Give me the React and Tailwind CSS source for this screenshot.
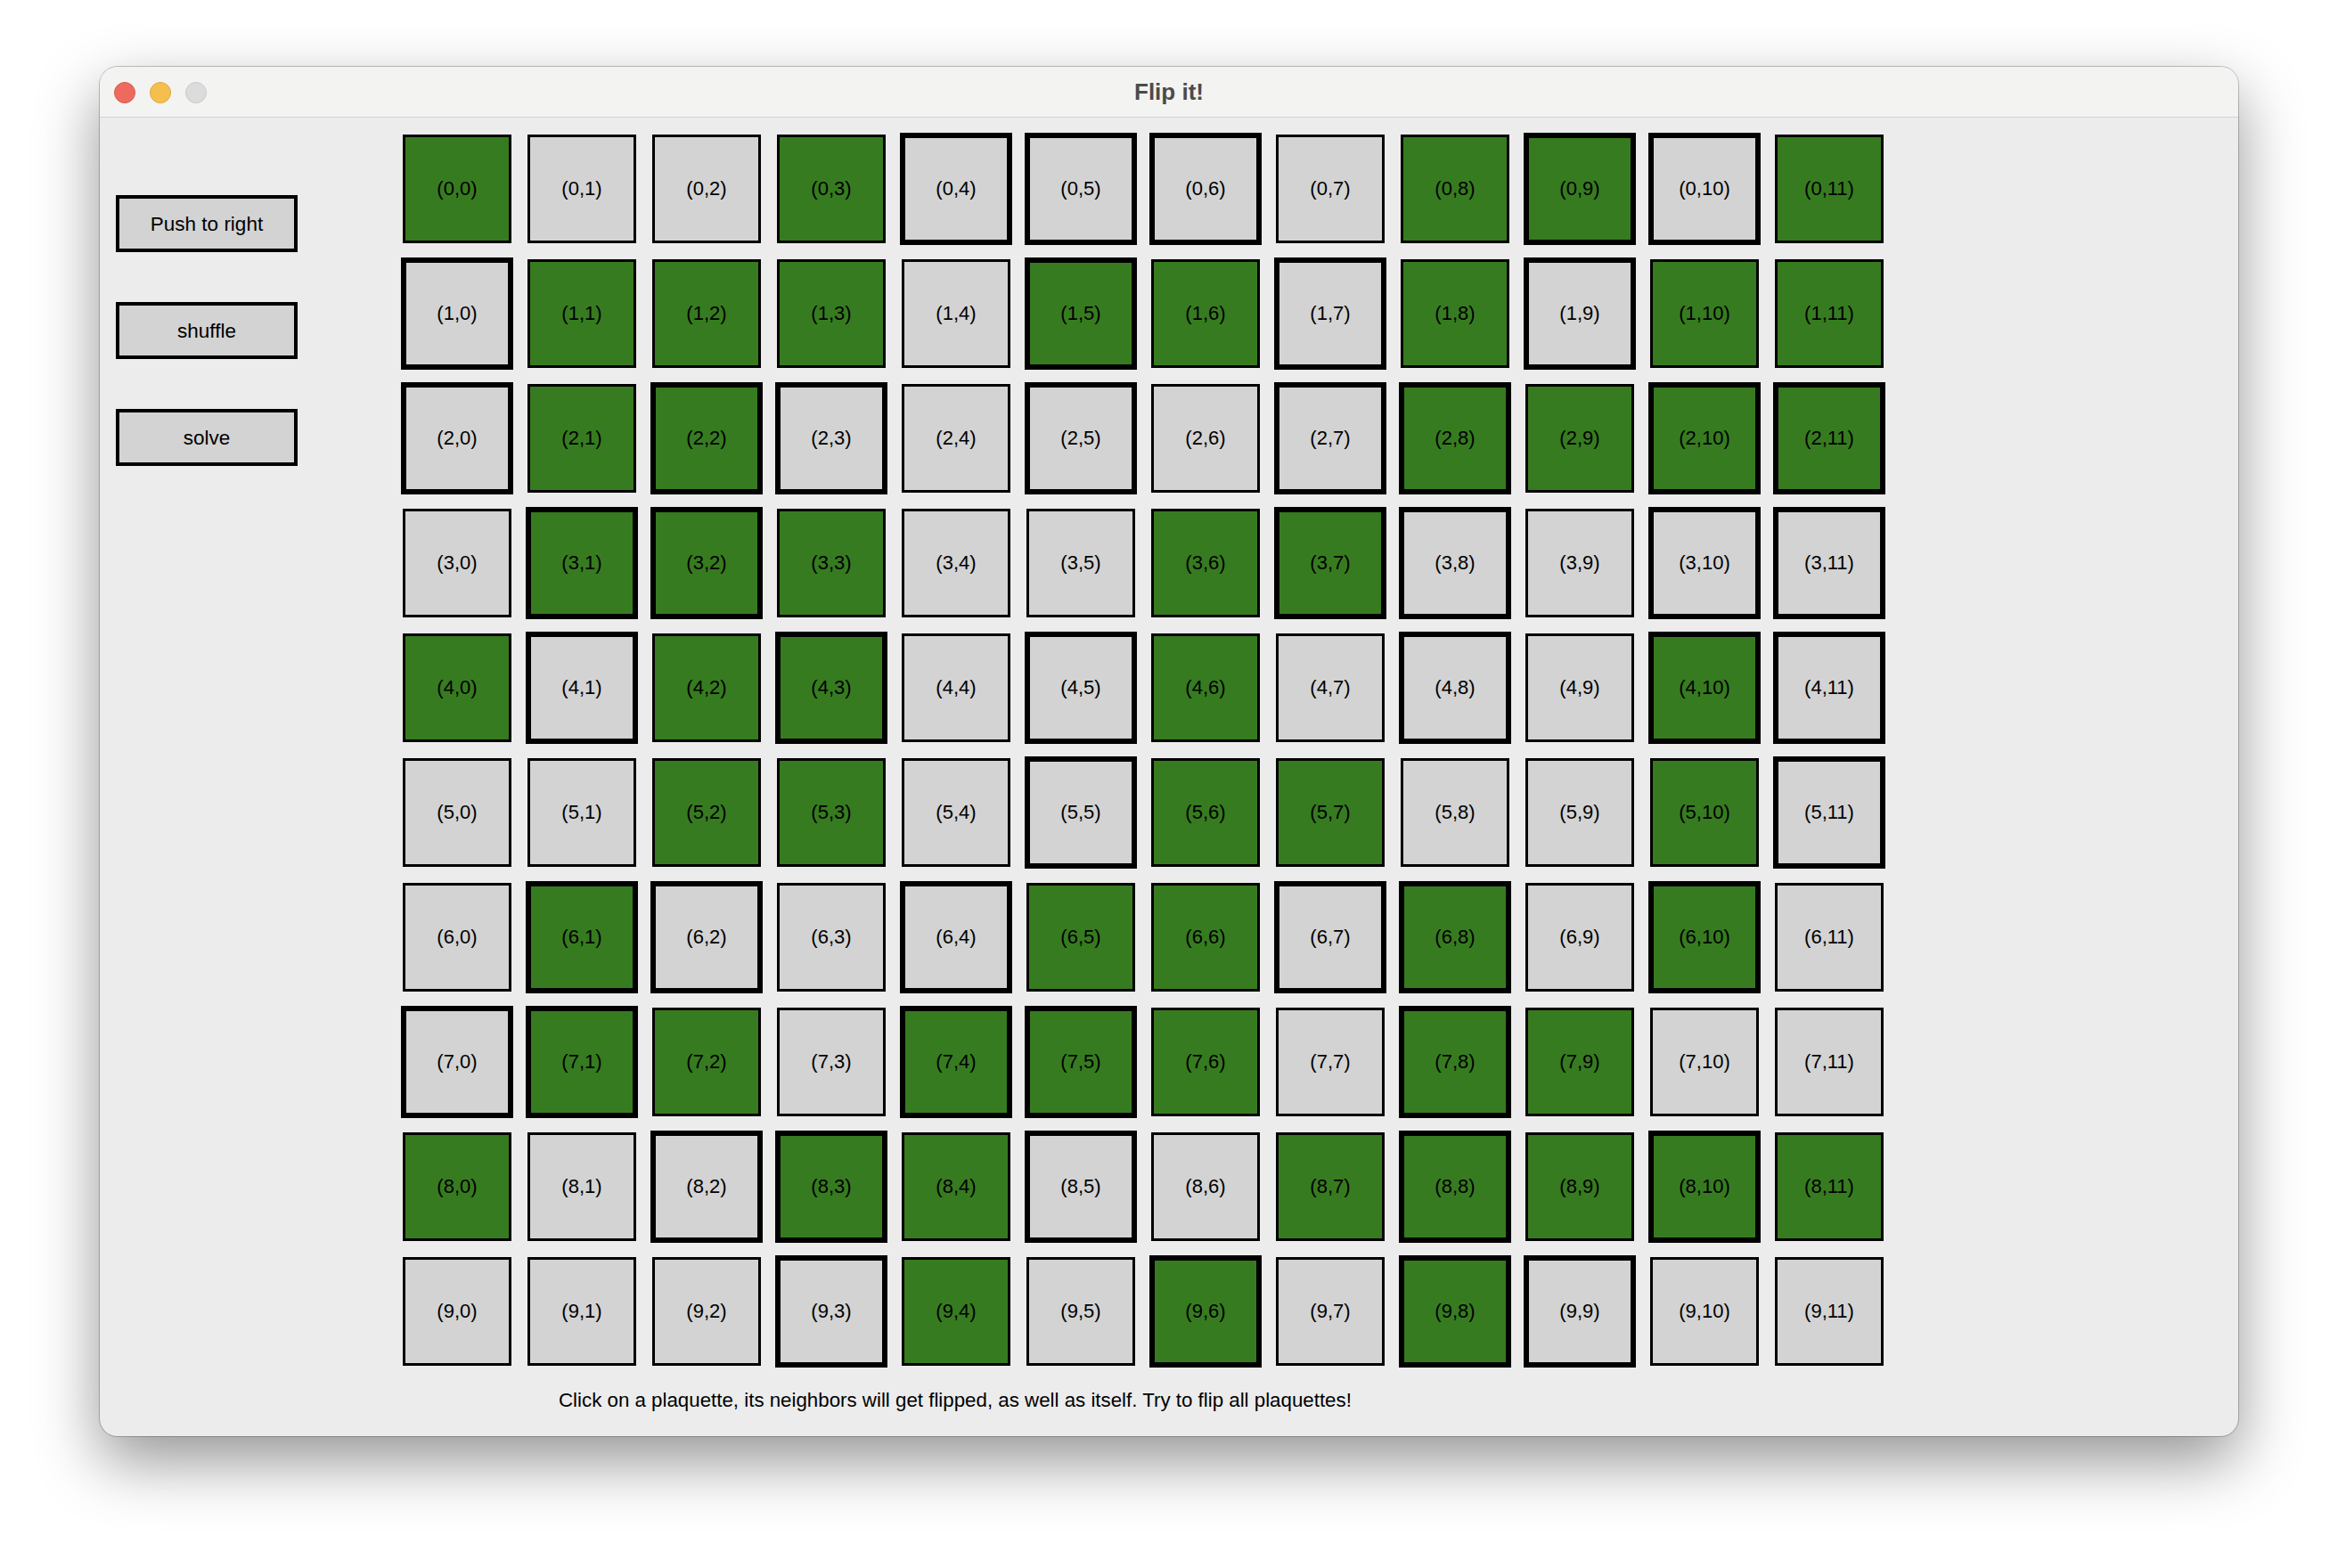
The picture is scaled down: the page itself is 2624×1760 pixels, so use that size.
import React, { useState } from "react";

/* Flip it! — plaquette board, 10 rows x 12 columns */

const FONT = { fontFamily: '"Liberation Sans", Arial, Helvetica, sans-serif' };

// G = green plaquette, . = grey
const START = [
  "G..G....GG.G",
  ".GGG.GG.G.GG",
  ".GG.....GGGG",
  ".GGG..GG....",
  "G.GG..G...G.",
  "..GG..GG..G.",
  ".G...GG.G.G.",
  ".GG.GGG.GG..",
  "G..GG..GGGGG",
  "....G.G.G...",
];

// X = marked (heavy frame)
const MARKS = [
  "....XXX..XX.",
  "X....X.X.X..",
  "X.XX.X.XX.XX",
  ".XX....XX.XX",
  ".X.X.X..X.XX",
  ".....X.....X",
  ".XX.X..XX.X.",
  "XX..XX..X...",
  "..XX.X..X.X.",
  "...X..X.XX..",
];

const toBoard = () => START.map((row) => row.split("").map((c) => c === "G"));

const Plaquette = ({ r, c, on, marked, onClick }) => (
  <button
    type="button"
    onClick={onClick}
    className={`flex h-[122px] w-[122px] items-center justify-center border-black text-[22px] leading-none text-black ${
      on ? "bg-[#377b20]" : "bg-[#d3d3d3]"
    } ${marked ? "border-4 ring-2 ring-black" : "border-[3px]"}`}
  >
    ({r},{c})
  </button>
);

const SideButton = ({ label, onClick }) => (
  <button
    type="button"
    onClick={onClick}
    className="flex h-[64px] w-[204px] items-center justify-center border-4 border-black bg-[#d3d3d3] pt-[2px] text-[22.5px] leading-none text-black"
  >
    {label}
  </button>
);

export default function App() {
  const [board, setBoard] = useState(toBoard);

  const flip = (r, c) => {
    setBoard((b) =>
      b.map((row, i) =>
        row.map((v, j) =>
          (i === r && Math.abs(j - c) <= 1) || (j === c && Math.abs(i - r) === 1) ? !v : v
        )
      )
    );
  };

  const pushRight = () => setBoard((b) => b.map((row) => [row[row.length - 1], ...row.slice(0, -1)]));
  const shuffle = () => setBoard((b) => b.map((row) => row.map(() => Math.random() < 0.5)));
  const solve = () => setBoard((b) => b.map((row) => row.map(() => true)));

  return (
    <div className="h-[1760px] w-[2624px] bg-white pl-[112px] pt-[75px]" style={FONT}>
      <div className="flex h-[1537px] w-[2400px] flex-col overflow-hidden rounded-[20px] bg-[#ececec] shadow-[0_0_0_1px_rgba(0,0,0,0.22),0_28px_70px_rgba(0,0,0,0.42)]">
        {/* title bar */}
        <div className="relative flex h-[57px] shrink-0 items-center justify-center border-b border-[#d2d2d2] bg-[#f3f3f2]">
          <div className="absolute left-[16px] top-[17px] flex gap-[16px]">
            <span className="h-[24px] w-[24px] rounded-full border border-[#d9564b] bg-[#ee6a5f]" />
            <span className="h-[24px] w-[24px] rounded-full border border-[#dea63a] bg-[#f5bf4f]" />
            <span className="h-[24px] w-[24px] rounded-full border border-[#c9c9c9] bg-[#dcdcdc]" />
          </div>
          <span className="text-[26px] font-bold text-[#4b4b4b]">Flip it!</span>
        </div>

        {/* body */}
        <div className="flex">
          <div className="flex flex-col gap-[56px] pl-[18px] pt-[87px]">
            <SideButton label="Push to right" onClick={pushRight} />
            <SideButton label="shuffle" onClick={shuffle} />
            <SideButton label="solve" onClick={solve} />
          </div>

          <div className="ml-[118px] grid grid-cols-12 gap-[18px] pt-[19px]">
            {board.map((row, r) =>
              row.map((on, c) => (
                <Plaquette
                  key={`${r}-${c}`}
                  r={r}
                  c={c}
                  on={on}
                  marked={MARKS[r][c] === "X"}
                  onClick={() => flip(r, c)}
                />
              ))
            )}
          </div>
        </div>

        <div className="mt-[26px] pl-[515px] text-[22.3px] leading-[26px] text-black">
          Click on a plaquette, its neighbors will get flipped, as well as itself. Try to flip all plaquettes!
        </div>
      </div>
    </div>
  );
}
